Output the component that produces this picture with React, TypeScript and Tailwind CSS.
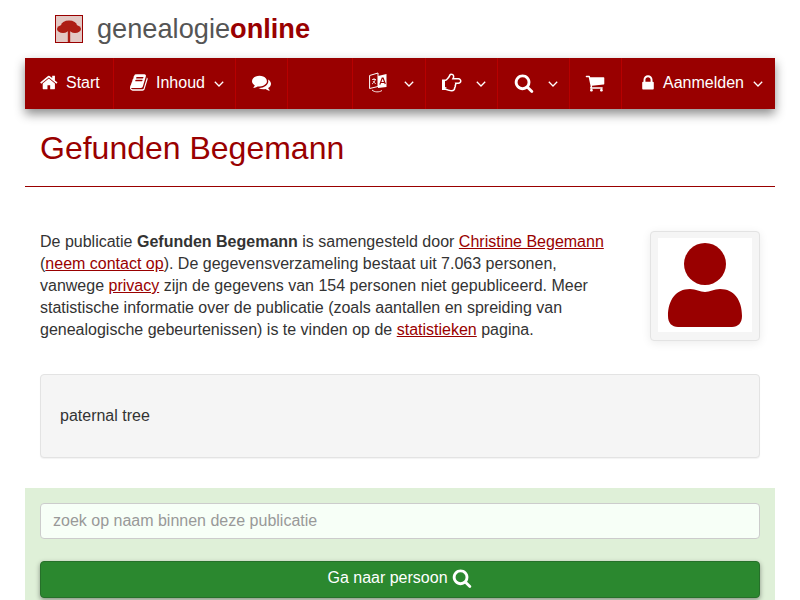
import type { ReactNode } from "react";

// font-awesome 4 glyphs, react-icons only ships the 5+ redraws
const HOME = "M1408 992v480q0 26-19 45t-45 19h-384v-384h-256v384h-384q-26 0-45-19t-19-45v-480q0-1 .5-3t.5-3l575-474 575 474q1 2 1 6zm223-69l-62 74q-8 9-21 11h-3q-13 0-21-7l-692-577-692 577q-12 8-24 7-13-2-21-11l-62-74q-8-10-7-23.500t11-21.500l719-599q32-26 76-26t76 26l244 204v-195q0-14 9-23t23-9h192q14 0 23 9t9 23v408l219 182q10 8 11 21.500t-7 23.500z";
const BOOK = "M1639 478q40 57 18 129l-275 906q-19 64-76.500 107.500t-122.500 43.500h-923q-77 0-148.500-53.500t-99.500-131.500q-24-67-2-127 0-4 3-27t4-37q1-8-3-21.500t-3-19.500q2-11 8-21t16.500-23.500 16.500-23.500q23-38 45-91.500t30-91.500q3-10 .5-30t-.5-28q3-11 17-28t17-23q21-36 42-92t25-90q1-9-2.500-32t.5-28q4-13 22-30.500t22-22.500q19-26 42.500-84.500t27.500-96.500q1-8-3-25.500t-2-26.500q2-8 9-18t18-23 17-21q8-12 16.500-30.500t15-35 16-36 19.500-32 26.500-23.500 36-11.500 47.500 5.500l-1 3q38-9 51-9h761q74 0 114 56t18 130l-274 906q-36 119-71.500 153.500t-128.500 34.500h-869q-27 0-38 15-11 16-1 43 24 70 144 70h923q29 0 56-15.500t35-41.500l300-987q7-22 5-57 38 15 59 43zm-1064 2q-4 13 2 22.500t20 9.500h608q13 0 25.500-9.500t16.500-22.500l21-64q4-13-2-22.500t-20-9.500h-608q-13 0-25.500 9.500t-16.500 22.500zm-83 256q-4 13 2 22.500t20 9.500h608q13 0 25.500-9.500t16.500-22.500l21-64q4-13-2-22.500t-20-9.500h-608q-13 0-25.500 9.500t-16.500 22.500z";
const COMMENTS = "M1408 768q0 139-94 257t-256.500 186.500-353.500 68.500q-86 0-176-16-124 88-278 128-36 9-86 16h-3q-11 0-20.500-8t-11.500-21q-1-3-1-6.500t.5-6.500 2-6l2.500-5 3.500-5.500 4-5 4.500-5 4-4.500q5-6 23-25t26-29.500 22.500-29 25-38.500 20.500-44q-124-72-195-177t-71-224q0-139 94-257t256.500-186.500 353.500-68.500 353.500 68.500 256.500 186.500 94 257zm384 256q0 120-71 224.500t-195 176.500q10 24 20.500 44t25 38.500 22.500 29 26 29.500 23 25q1 1 4 4.500t4.500 5 4 5 3.500 5.500l2.500 5 2 6 .5 6.500-1 6.500q-3 14-13 22t-22 7q-50-7-86-16-154-40-278-128-90 16-176 16-271 0-472-132 58 4 88 4 161 0 309-45t264-129q125-92 192-212t67-254q0-77-23-152 129 71 204 178t75 230z";
const HAND = "M384 1344q0-26-19-45t-45-19-45 19-19 45 19 45 45 19 45-19 19-45zm1152-576q0-51-39-89.500t-89-38.500h-576q0-20 15-48.500t33-55 33-68 15-84.500q0-67-44.500-97.500t-115.500-30.500q-24 0-90 139-24 44-37 65-40 64-112 145-71 81-101 106-69 57-140 57h-32v640h32q72 0 167 32t193.500 64 179.500 32q189 0 189-167 0-26-5-56 30-16 47.500-52.500t17.500-73.500-18-69q53-50 53-119 0-25-10-55.500t-25-47.500h331q52 0 90-38t38-90zm128-1q0 105-75.500 181t-180.500 76h-169q-4 62-37 119 3 21 3 43 0 101-60 178 1 139-85 219.500t-227 80.500q-133 0-322-69-164-59-223-59h-288q-53 0-90.500-37.500t-37.500-90.500v-640q0-53 37.500-90.500t90.500-37.500h288q10 0 21.500-4.500t23.500-14 22.500-18 24-22.500 20.500-21.500 19-21.500 14-17q65-74 100-129 13-21 33-62t37-72 40.500-63 55-49.500 69.500-17.500q125 0 206.500 67t81.500 189q0 68-22 128h374q104 0 180 76t76 179z";
const SEARCH = "M1216 832q0-185-131.500-316.500t-316.500-131.500-316.500 131.500-131.500 316.500 131.500 316.500 316.500 131.500 316.500-131.500 131.500-316.500zm512 832q0 52-38 90t-90 38q-54 0-90-38l-343-342q-179 124-399 124-143 0-273.500-55.500t-225-150-150-225-55.500-273.500 55.500-273.500 150-225 225-150 273.500-55.500 273.500 55.500 225 150 150 225 55.500 273.500q0 220-124 399l343 343q37 37 37 90z";
const CART = "M704 1536q0 52-38 90t-90 38-90-38-38-90 38-90 90-38 90 38 38 90zm896 0q0 52-38 90t-90 38-90-38-38-90 38-90 90-38 90 38 38 90zm128-1088v512q0 24-16.500 42.500t-40.500 21.500l-1044 122q13 60 13 70 0 16-24 64h920q26 0 45 19t19 45-19 45-45 19h-1024q-26 0-45-19t-19-45q0-11 8-31.500t16-36 21.500-40 15.500-29.500l-177-823h-204q-26 0-45-19t-19-45 19-45 45-19h256q16 0 28.500 6.500t19.500 15.500 13 24.500 8 26 5.500 29.500 4.500 26h1201q26 0 45 19t19 45z";
const LOCK = "M640 768h512v-192q0-106-75-181t-181-75-181 75-75 181v192zm832 96v576q0 40-28 68t-68 28h-960q-40 0-68-28t-28-68v-576q0-40 28-68t68-28h32v-192q0-184 132-316t316-132 316 132 132 316v192h32q40 0 68 28t28 68z";

function Fa({ d, className }: { d: string; className: string }) {
  return (
    <svg viewBox="0 0 1792 1792" fill="currentColor" className={className}>
      <path d={d} />
    </svg>
  );
}

function Caret() {
  return (
    <svg viewBox="0 0 10 6" fill="none" stroke="currentColor" strokeWidth="1.3" className="ml-auto mt-[3px] h-[6px] w-[10px] shrink-0">
      <path d="M.8.8 5 5l4.200-4.200" />
    </svg>
  );
}

function LanguageIcon() {
  return (
    <svg viewBox="0 0 18 21" className="-mt-[1px] h-[21px] w-[18px]" fill="none">
      <path d="M.6 3.500 9 1v13.500L.6 16.500z" stroke="#fff" strokeWidth="1" />
      <path d="M3 7.500h4M5 6v1.500M6.300 7.500C5.800 9.500 4.500 11 3 12M4 9c.6 1.200 1.500 2 2.800 2.700" stroke="#fff" strokeWidth=".8" />
      <path d="M9 4l8.500-2v13L9 16z" fill="#fff" />
      <path d="M10.800 12.600 13.200 6h.9l2.200 6M11.700 10.500h3.800" stroke="#990000" strokeWidth="1.200" />
      <path d="M3 18c2.500 2.300 7 2.500 10 .5" stroke="#fff" strokeWidth=".9" />
    </svg>
  );
}

function NavItem({ width, icon, label, caret, pad = "pl-[16px]" }: { width: string; icon?: ReactNode; label?: string; caret?: boolean; pad?: string }) {
  return (
    <div className={`${width} ${pad} flex h-full items-center border-r border-[#b70000] pb-[2px] pr-[11px] text-white`}>
      {icon}
      {label && <span className="ml-[7px]">{label}</span>}
      {caret && <Caret />}
    </div>
  );
}

function TreeLogo() {
  return (
    <div className="h-[28px] w-[28px] border border-[#990000] bg-[#e3c8c4]">
      <svg viewBox="0 0 26 26" className="h-full w-full">
        <g fill="#ad1d14" className="blur-[0.6px]">
          <ellipse cx="13" cy="9.500" rx="8" ry="5" />
          <ellipse cx="7" cy="13" rx="6" ry="4" />
          <ellipse cx="19" cy="13" rx="6" ry="4" />
          <rect x="11.800" y="14" width="2.400" height="12" />
        </g>
      </svg>
    </div>
  );
}

function PersonImage() {
  return (
    <svg viewBox="0 0 94 94" className="h-[94px] w-[94px] bg-white" fill="#990000">
      <circle cx="47" cy="26" r="21" />
      <path d="M10 78C10 62 18 51 32 51c6 0 10 3 15 3s9-3 15-3c14 0 22 11 22 27 0 7-4 11-10 11H20c-6 0-10-4-10-11z" />
    </svg>
  );
}

export default function App() {
  return (
    <div className="mx-auto h-[600px] w-[800px] overflow-hidden bg-white px-[25px] font-['Liberation_Sans',Arial,sans-serif] text-[16px] text-[#333]">
      <header className="flex h-[58px] items-center pl-[30px]">
        <TreeLogo />
        <div className="ml-[14px] text-[27.2px] leading-none text-[#555]">
          genealogie<b className="text-[#990000]">online</b>
        </div>
      </header>

      <nav className="flex h-[51px] bg-[#990000] shadow-[0_5px_10px_rgba(0,0,0,0.45)]">
        <NavItem width="w-[89px]" pad="pl-[15px]" icon={<Fa d={HOME} className="h-[19px] w-[19px]" />} label="Start" />
        <NavItem width="w-[122px]" icon={<Fa d={BOOK} className="h-[19px] w-[19px]" />} label="Inhoud" caret />
        <NavItem width="w-[52px]" icon={<Fa d={COMMENTS} className="h-[19px] w-[19px]" />} />
        <NavItem width="w-[65px]" />
        <NavItem width="w-[73px]" icon={<LanguageIcon />} caret />
        <NavItem width="w-[72px]" icon={<Fa d={HAND} className="h-[21px] w-[21px]" />} caret />
        <NavItem width="w-[72px]" icon={<Fa d={SEARCH} className="h-[20px] w-[20px]" />} caret />
        <NavItem width="w-[52px]" pad="pl-[15px]" icon={<Fa d={CART} className="h-[20px] w-[20px]" />} />
        <div className="flex h-full flex-1 items-center pb-[2px] pl-[17px] pr-[12px] text-white">
          <Fa d={LOCK} className="h-[18px] w-[18px]" />
          <span className="ml-[6px]">Aanmelden</span>
          <Caret />
        </div>
      </nav>

      <h1 className="border-b border-[#990000] px-[15px] pb-[19px] pt-[21px] text-[32px] leading-[37px] text-[#990000]">
        Gefunden Begemann
      </h1>

      <section className="flex justify-between px-[15px] pt-[34px]">
        <p className="w-[572px] pt-[10px] leading-[22px]">
          De publicatie <b>Gefunden Begemann</b> is samengesteld door <a className="text-[#990000] underline">Christine Begemann</a>{" "}
          (<a className="text-[#990000] underline">neem contact op</a>). De gegevensverzameling bestaat uit 7.063 personen, vanwege{" "}
          <a className="text-[#990000] underline">privacy</a> zijn de gegevens van 154 personen niet gepubliceerd. Meer statistische
          informatie over de publicatie (zoals aantallen en spreiding van genealogische gebeurtenissen) is te vinden op de{" "}
          <a className="text-[#990000] underline">statistieken</a> pagina.
        </p>
        <div className="mt-[10px] flex h-[110px] w-[110px] items-start justify-center rounded-[4px] border border-[#e3e3e3] bg-[#f5f5f5] pt-[6px] shadow-[0_2px_10px_rgba(0,0,0,0.08)]">
          <PersonImage />
        </div>
      </section>

      <div className="mx-[15px] mt-[33px] flex h-[84px] items-center rounded-[4px] border border-[#e3e3e3] bg-[#f5f5f5] px-[19px] shadow-[0_1px_1px_rgba(0,0,0,0.05)]">
        paternal tree
      </div>

      <section className="mt-[30px] bg-[#dff0d8] px-[15px] pb-[15px] pt-[15px]">
        <input
          placeholder="zoek op naam binnen deze publicatie"
          className="block h-[36px] w-full rounded-[4px] border border-[#ccc] bg-[#f7fff7] px-[12px] text-[16px] outline-none placeholder:text-[#999]"
        />
        <button className="mt-[22px] flex h-[37px] w-full items-center justify-center rounded-[4px] border border-[#26702a] bg-[#2b882f] pb-[3px] pr-[1px] text-white shadow-[0_2px_5px_rgba(0,0,0,0.4)]">
          Ga naar persoon
          <Fa d={SEARCH} className="ml-[4px] h-[20px] w-[20px]" />
        </button>
      </section>
    </div>
  );
}
